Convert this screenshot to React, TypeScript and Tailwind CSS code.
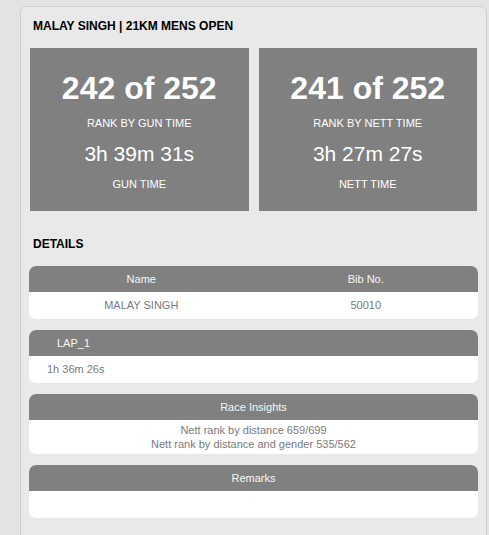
import React from 'react';

type Stat = { rank: string; rankLabel: string; time: string; timeLabel: string };

const stats: Stat[] = [
  { rank: '242 of 252', rankLabel: 'RANK BY GUN TIME', time: '3h 39m 31s', timeLabel: 'GUN TIME' },
  { rank: '241 of 252', rankLabel: 'RANK BY NETT TIME', time: '3h 27m 27s', timeLabel: 'NETT TIME' },
];

const StatBox: React.FC<{ stat: Stat }> = ({ stat }) => (
  <div className="flex-1 h-[163px] bg-[#808080] text-white flex flex-col items-center pt-[22px]">
    <div className="text-[32px] leading-[36px] font-bold">{stat.rank}</div>
    <div className="text-[11px] leading-[14px] mt-[10px]">{stat.rankLabel}</div>
    <div className="text-[21px] leading-[26px] mt-[11px]">{stat.time}</div>
    <div className="text-[11px] leading-[14px] mt-[10px]">{stat.timeLabel}</div>
  </div>
);

const Panel: React.FC<{ header: React.ReactNode; body: React.ReactNode; headerClass?: string; bodyClass?: string }> = ({
  header,
  body,
  headerClass = '',
  bodyClass = '',
}) => (
  <div className="mx-[-1px] rounded-[7px] overflow-hidden bg-white">
    <div className={`h-[26px] bg-[#808080] text-[#f7f7f7] text-[11px] flex items-center ${headerClass}`}>{header}</div>
    <div className={`text-[#7a7a7a] text-[11px] ${bodyClass}`}>{body}</div>
  </div>
);

export default function App() {
  return (
    <div
      className="w-[489px] h-[535px] overflow-hidden bg-[#e3e3e3] pl-[20px] pt-[6px]"
      style={{ fontFamily: '"Liberation Sans", Arial, sans-serif' }}
    >
      <div className="w-[467px] h-[560px] bg-[#e9e9e9] border border-[#cfcfcf] rounded-t-[6px] px-[9px]">
        {/* Title */}
        <div className="h-[41px] flex items-center pb-[3px] pl-[3px] text-[12px] font-bold text-black">
          MALAY SINGH | 21KM MENS OPEN
        </div>

        {/* Stat boxes */}
        <div className="flex gap-[10px]">
          {stats.map((s) => (
            <StatBox key={s.rank} stat={s} />
          ))}
        </div>

        {/* Details */}
        <div className="h-[55px] flex items-center pl-[3px] pt-[11px] text-[12px] font-bold text-black">DETAILS</div>

        <div className="flex flex-col gap-[11px]">
          <Panel
            header={
              <>
                <div className="flex-1 text-center">Name</div>
                <div className="flex-1 text-center">Bib No.</div>
              </>
            }
            body={
              <div className="h-[27px] flex items-center">
                <div className="flex-1 text-center">MALAY SINGH</div>
                <div className="flex-1 text-center">50010</div>
              </div>
            }
          />

          <Panel
            headerClass="pl-[28px]"
            header={<span>LAP_1</span>}
            body={<div className="h-[27px] flex items-center pl-[18px]">1h 36m 26s</div>}
          />

          <Panel
            headerClass="justify-center"
            header={<span>Race Insights</span>}
            body={
              <div className="h-[34px] flex flex-col items-center justify-center leading-[14px]">
                <div>Nett rank by distance 659/699</div>
                <div>Nett rank by distance and gender 535/562</div>
              </div>
            }
          />

          <Panel
            headerClass="justify-center"
            header={<span>Remarks</span>}
            body={<div className="h-[27px]" />}
          />
        </div>
      </div>
    </div>
  );
}
